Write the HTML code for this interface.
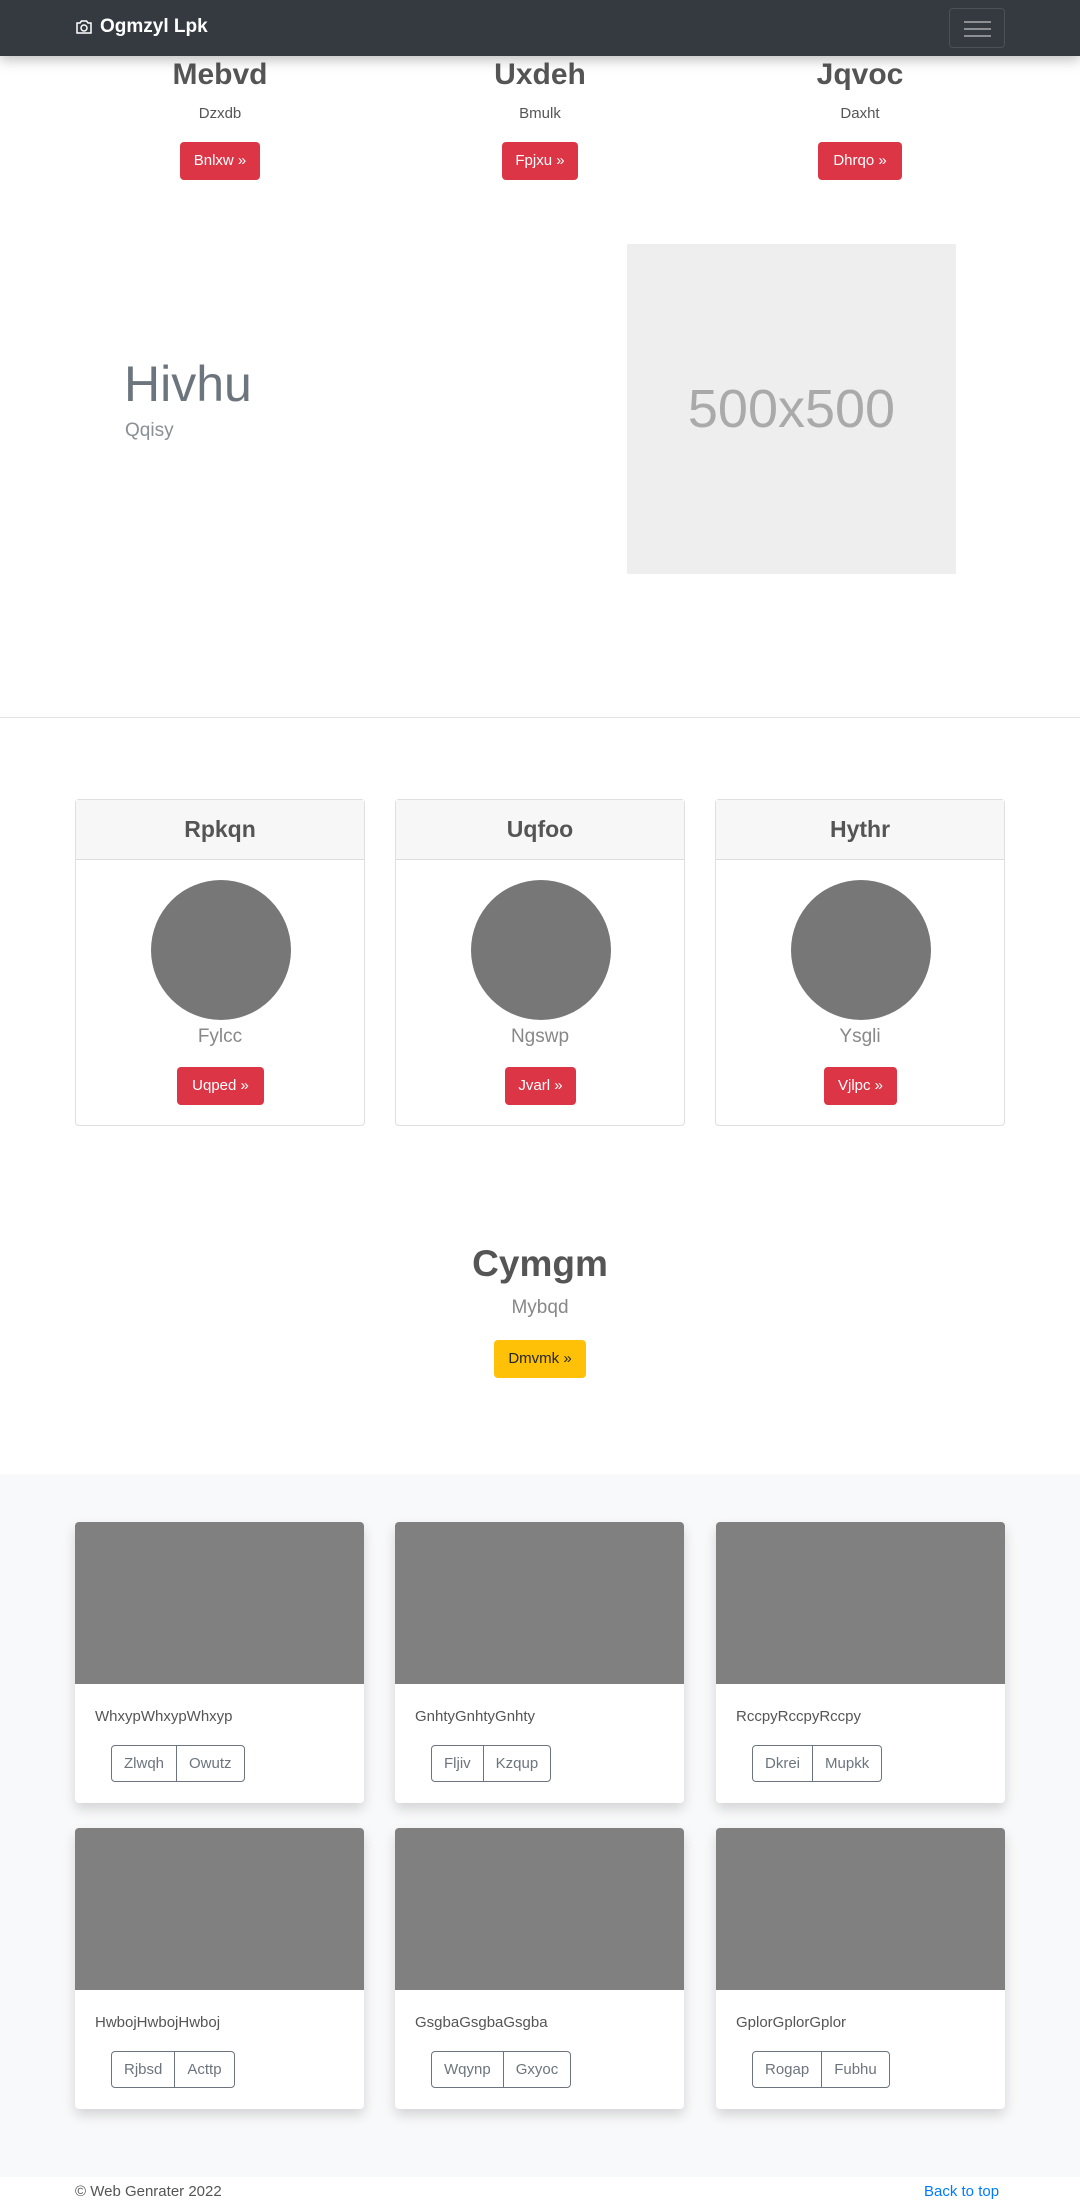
<!DOCTYPE html>
<html><head><meta charset="utf-8"><style>
*{box-sizing:border-box;margin:0;padding:0}
body{width:1080px;height:2206px;font-family:"Liberation Sans",sans-serif;color:#212529;background:#fff;position:relative;overflow:hidden;font-size:16px}
.nav{position:absolute;left:0;top:0;width:1080px;height:56px;background:#343a40;box-shadow:0 4px 12px rgba(0,0,0,.25);z-index:5}
.brand{position:absolute;left:75px;top:16px;color:#fff;font-weight:bold;font-size:19px;display:flex;align-items:center;gap:7px}
.tog{position:absolute;left:949px;top:8px;width:56px;height:40px;border:1px solid #4b5157;border-radius:4px}
.tog i{position:absolute;left:14px;width:27px;height:2px;background:#8c9095}
.abs{position:absolute}
.c{text-align:center}
.btn{position:absolute;height:38px;line-height:38px;border-radius:4px;color:#fff;background:#dc3545;font-size:15px;text-align:center}
h2{font-size:30px;font-weight:bold;color:#555}
.card{position:absolute;border:1px solid #dfdfdf;border-radius:4px;width:290px;height:327px;top:799px;background:#fff}
.card .hd{height:60px;background:#f7f7f7;border-bottom:1px solid #dfdfdf;text-align:center;line-height:58px;font-size:23px;font-weight:bold;color:#555}
.circ{position:absolute;left:75px;top:80px;width:140px;height:140px;border-radius:50%;background:#777}
.pc{position:absolute;width:289px;height:281px;background:#fff;border-radius:4px;box-shadow:0 6px 12px rgba(0,0,0,.15)}
.pc .im{height:162px;background:#808080;border-radius:4px 4px 0 0}
.pc .t{position:absolute;left:20px;top:186px;font-size:15px;color:#555}
.bg{position:absolute;left:36px;top:223px;height:37px;border:1px solid #6c757d;border-radius:4px;display:flex;font-size:15px;color:#6c757d}
.bg span{padding:0 12px;line-height:35px}
.bg span+span{border-left:1px solid #6c757d}
</style></head><body>
<div class="nav"><div class="brand"><svg width="18" height="16" viewBox="0 0 18 16" fill="none" stroke="#fff" stroke-width="1.5"><path d="M2 4h3l1.5-2h5L13 4h3v10H2z"/><circle cx="9" cy="9" r="3"/></svg>Ogmzyl Lpk</div>
<div class="tog"><i style="top:12px"></i><i style="top:19px"></i><i style="top:26px"></i></div></div>

<h2 class="abs c" style="left:60px;width:320px;top:58px">Mebvd</h2>
<h2 class="abs c" style="left:380px;width:320px;top:58px">Uxdeh</h2>
<h2 class="abs c" style="left:700px;width:320px;top:58px">Jqvoc</h2>
<div class="abs c" style="left:60px;width:320px;top:105px;font-size:15px;color:#555">Dzxdb</div>
<div class="abs c" style="left:380px;width:320px;top:105px;font-size:15px;color:#555">Bmulk</div>
<div class="abs c" style="left:700px;width:320px;top:105px;font-size:15px;color:#555">Daxht</div>
<div class="btn" style="left:180px;top:142px;width:80px">Bnlxw »</div>
<div class="btn" style="left:502px;top:142px;width:76px">Fpjxu »</div>
<div class="btn" style="left:818px;top:142px;width:84px">Dhrqo »</div>

<div class="abs" style="left:124px;top:355px;font-size:50px;color:#6c757d;font-weight:300">Hivhu</div>
<div class="abs" style="left:125px;top:420px;font-size:19px;color:#8a9096">Qqisy</div>
<div class="abs c" style="left:627px;top:244px;width:329px;height:330px;background:#eee;color:#aaa;font-size:54px;line-height:330px">500x500</div>
<div class="abs" style="left:0;top:717px;width:1080px;height:1px;background:#e3e3e3"></div>

<div class="card" style="left:75px"><div class="hd">Rpkqn</div><div class="circ"></div><div class="abs c" style="top:226px;width:100%;font-size:19px;color:#888">Fylcc</div><div class="btn" style="left:101px;top:267px;width:87px">Uqped »</div></div>
<div class="card" style="left:395px"><div class="hd">Uqfoo</div><div class="circ"></div><div class="abs c" style="top:226px;width:100%;font-size:19px;color:#888">Ngswp</div><div class="btn" style="left:109px;top:267px;width:71px">Jvarl »</div></div>
<div class="card" style="left:715px"><div class="hd">Hythr</div><div class="circ"></div><div class="abs c" style="top:226px;width:100%;font-size:19px;color:#888">Ysgli</div><div class="btn" style="left:108px;top:267px;width:73px">Vjlpc »</div></div>

<div class="abs c" style="left:0;width:1080px;top:1243px;font-size:37px;font-weight:bold;color:#555">Cymgm</div>
<div class="abs c" style="left:0;width:1080px;top:1297px;font-size:19px;color:#888">Mybqd</div>
<div class="btn" style="left:494px;top:1340px;width:92px;background:#ffc107;color:#212529">Dmvmk »</div>

<div class="abs" style="left:0;top:1474px;width:1080px;height:703px;background:#f8f9fa"></div>
<div class="pc" style="left:75px;top:1522px"><div class="im"></div><div class="t">WhxypWhxypWhxyp</div><div class="bg"><span>Zlwqh</span><span>Owutz</span></div></div>
<div class="pc" style="left:395px;top:1522px"><div class="im"></div><div class="t">GnhtyGnhtyGnhty</div><div class="bg"><span>Fljiv</span><span>Kzqup</span></div></div>
<div class="pc" style="left:716px;top:1522px"><div class="im"></div><div class="t">RccpyRccpyRccpy</div><div class="bg"><span>Dkrei</span><span>Mupkk</span></div></div>
<div class="pc" style="left:75px;top:1828px"><div class="im"></div><div class="t">HwbojHwbojHwboj</div><div class="bg"><span>Rjbsd</span><span>Acttp</span></div></div>
<div class="pc" style="left:395px;top:1828px"><div class="im"></div><div class="t">GsgbaGsgbaGsgba</div><div class="bg"><span>Wqynp</span><span>Gxyoc</span></div></div>
<div class="pc" style="left:716px;top:1828px"><div class="im"></div><div class="t">GplorGplorGplor</div><div class="bg"><span>Rogap</span><span>Fubhu</span></div></div>

<div class="abs" style="left:75px;top:2183px;font-size:15px;color:#555">© Web Genrater 2022</div>
<div class="abs" style="left:924px;top:2183px;font-size:15px;color:#007bff">Back to top</div>
</body></html>
